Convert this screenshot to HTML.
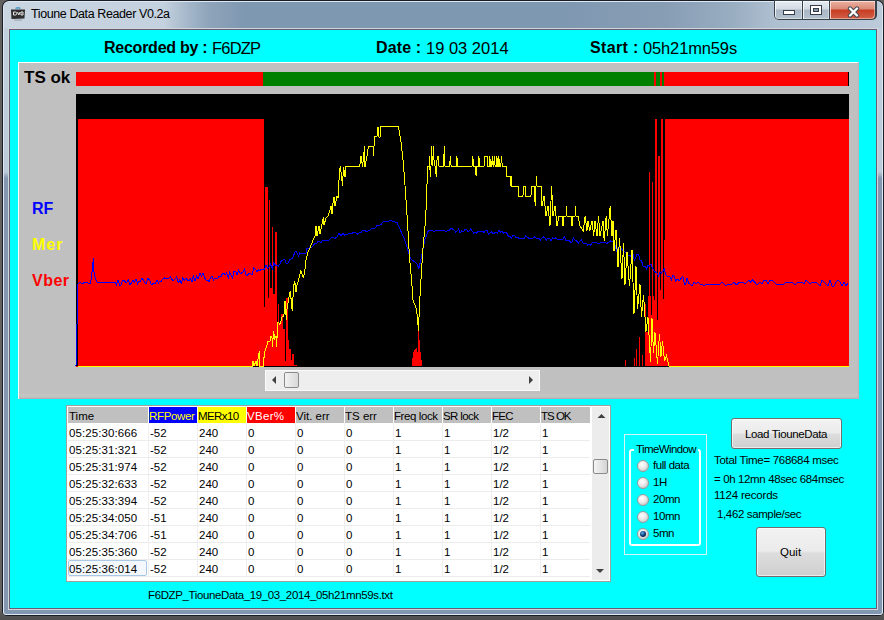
<!DOCTYPE html>
<html><head><meta charset="utf-8">
<style>
html,body{margin:0;padding:0;}
body{width:884px;height:620px;overflow:hidden;position:relative;background:#626160;font-family:"Liberation Sans",sans-serif;}
.a{position:absolute;}
.t{position:absolute;white-space:nowrap;line-height:1;}
#win{left:2px;top:0;width:882px;height:616px;background:#1a1e24;border-radius:7px 7px 5px 5px;}
#winl{left:3px;top:1px;width:880px;height:614px;background:#dde8f5;border-radius:6px 6px 3px 3px;}
#frame{left:4px;top:2px;width:878px;height:612px;border-radius:5px 5px 2px 2px;
 background:linear-gradient(to bottom,#c2cfdc 0px,#bccbd9 170px,#8398b0 176px,#8398b0 612px);}
#title{left:4px;top:2px;width:878px;height:26px;border-radius:5px 5px 0 0;background:linear-gradient(to right,#c9d5e1 0px,#c4d1de 160px,#a9bbcd 180px,#8ea4ba 205px,#7f98b1 240px,#7f98b1 560px,#879db4 660px,#9aaec2 730px,#aebfd0 770px,#bccada 878px);}
#cl{left:8px;top:28px;width:870px;height:582px;background:#ccd8d8;}
#cb{left:9px;top:29px;width:868px;height:580px;background:#6a5a78;}
#client{left:10px;top:30px;width:866px;height:578px;background:#00ffff;}
#icon{left:12px;top:8px;width:12px;height:10px;background:#3a3a3a;border-radius:2px;transform:skewY(3deg);}
#icon2{left:14px;top:10px;width:8px;height:6px;background:#d8d8d8;}
#icon3{left:16px;top:11px;width:4px;height:4px;background:#3a3a3a;}
#ttl{left:31px;top:8px;font-size:12.5px;letter-spacing:-0.4px;color:#000;}
/* caption buttons */
#btns{left:774px;top:0px;width:103px;height:20px;background:#38404a;border-radius:0 0 5px 5px;}
#bmin{left:775px;top:1px;width:27px;height:18px;border-radius:0 0 0 4px;box-shadow:inset 1px 1px 0 rgba(255,255,255,0.75),inset -1px -1px 0 rgba(255,255,255,0.4);background:linear-gradient(to bottom,#e6ecf2 0px,#d2dae3 8px,#aab8c6 9px,#b4c1cf 18px);}
#bmax{left:803px;top:1px;width:26px;height:18px;box-shadow:inset 1px 1px 0 rgba(255,255,255,0.75),inset -1px -1px 0 rgba(255,255,255,0.4);background:linear-gradient(to bottom,#e6ecf2 0px,#d2dae3 8px,#aab8c6 9px,#b4c1cf 18px);}
#bcls{left:830px;top:1px;width:45px;height:18px;border-radius:0 0 4px 0;box-shadow:inset 1px 1px 0 rgba(255,230,220,0.8),inset -1px -1px 0 rgba(255,220,210,0.5);background:linear-gradient(to bottom,#eab2a4 0px,#dc8a76 8px,#c73c22 9px,#d26048 18px);}
#imin{left:783px;top:10px;width:10px;height:3px;background:#fff;border:1px solid #333c48;}
#imax{left:810px;top:5px;width:12px;height:10px;box-sizing:border-box;border:1px solid #333c48;background:#fff;}
#imaxi{left:813px;top:8px;width:6px;height:4px;box-sizing:border-box;border:1px solid #333c48;background:#8a98a8;}
/* header */
.hb{font-weight:bold;font-size:16px;color:#000;}
.hn{font-size:16.5px;color:#000;}
/* panel */
#panel{left:18px;top:62px;width:841px;height:337px;background:#c0c0c0;}
#panelb{left:18px;top:398px;width:841px;height:1px;background:#b4acb4;}
#panelr{left:858px;top:62px;width:1px;height:337px;background:#bcb4bc;}
#panell{left:19px;top:394px;width:839px;height:2px;background:#c6c6c0;}
#panelw1{left:18px;top:62px;width:840px;height:1px;background:#fff;}
#panelw2{left:18px;top:62px;width:1px;height:337px;background:#fff;}
#tsok{left:24px;top:69px;font-size:17px;font-weight:bold;color:#000;}
.lab{font-size:16px;font-weight:bold;}
/* scrollbar */
#hs{left:265px;top:370px;width:275px;height:21px;background:#eeeeee;border:1px solid #fafafa;box-sizing:border-box;}
#hthumb{left:284px;top:372px;width:15px;height:16px;box-sizing:border-box;border:1px solid #8a8a8a;border-radius:2px;background:linear-gradient(to right,#f2f2f2,#d8d8d8);}
/* table */
#tbl{left:66px;top:405px;width:545px;height:177px;background:#fff;border:1px solid #a0a0a0;box-sizing:border-box;}
.hd{position:absolute;top:407px;height:16px;background:#c0c0c0;}
.ht{position:absolute;top:411px;font-size:11.5px;white-space:nowrap;line-height:1;}
.cell{position:absolute;font-size:11.5px;white-space:nowrap;line-height:1;color:#000;}
.vl{position:absolute;top:423px;width:1px;height:153px;background:#efefef;}
.hl{position:absolute;left:68px;width:522px;height:1px;background:#ececec;}
#vs{left:592px;top:407px;width:17px;height:173px;background:#ececec;}
#vthumb{left:593px;top:459px;width:15px;height:15px;box-sizing:border-box;border:1px solid #8a8a8a;border-radius:2px;background:linear-gradient(to right,#f4f4f4,#d4d4d4);}
#sel{left:68px;top:560px;width:79px;height:16px;border:1px solid #a8c8e8;box-sizing:border-box;border-radius:2px;background:#f4f8fc;}
/* right */
#pnl{left:624px;top:434px;width:83px;height:121px;border:1px solid #d8f4f4;box-sizing:border-box;}
#grp{left:629px;top:449px;width:72px;height:97px;border:2px solid #fff;box-sizing:border-box;border-radius:3px;}
#grpcap{left:634px;top:442px;width:64px;height:12px;background:#00ffff;}
.rb{position:absolute;left:637px;width:12px;height:12px;border-radius:50%;box-sizing:border-box;border:1px solid #9a9a9a;background:radial-gradient(circle at 40% 35%,#ffffff 0px,#e8e8e8 4px,#c8c8c8 7px);}
.rl{position:absolute;left:653px;font-size:11.5px;letter-spacing:-0.45px;line-height:1;white-space:nowrap;}
.btn{position:absolute;box-sizing:border-box;border:1px solid #707070;border-radius:3px;box-shadow:inset 0 0 0 1px rgba(255,255,255,0.6);background:linear-gradient(to bottom,#f2f2f2 0%,#ebebeb 48%,#dddddd 52%,#cfcfcf 100%);}
.rt{position:absolute;font-size:11.5px;line-height:1;white-space:nowrap;color:#000;}
</style></head><body>
<div class="a" style="left:0;top:612px;width:884px;height:8px;background:linear-gradient(to bottom,#5a5a5a,#4e4e4e);"></div>
<div id="win" class="a"></div>
<div id="winl" class="a"></div>
<div id="frame" class="a"></div>
<div id="title" class="a"></div>
<div id="cl" class="a"></div>
<div id="cb" class="a"></div>
<div id="client" class="a"></div>
<svg class="a" style="left:10px;top:6px;" width="16" height="15" viewBox="0 0 16 15"><path d="M5.5 2.5 Q8 1 10.5 2.5" stroke="#4a9ad0" stroke-width="1.3" fill="none"/><path d="M1 3.5 L15 3.5 L14.5 12.5 L1.5 13 Z" fill="#2e2e2e"/><path d="M3.5 6 h2 q1.2 0 1.2 1.5 q0 1.5 -1.2 1.5 h-2 z M7.5 6 l1.3 3 l1.3 -3 M11 6 h2 v3 h-2 z" stroke="#e8e8e8" stroke-width="1" fill="none"/><path d="M4 14 h8" stroke="#9aa0a8" stroke-width="1"/></svg>
<div id="ttl" class="t">Tioune Data Reader V0.2a</div>
<div id="btns" class="a"></div>
<div id="bmin" class="a"></div><div id="bmax" class="a"></div><div id="bcls" class="a"></div>
<div id="imin" class="a"></div>
<div id="imax" class="a"></div><div id="imaxi" class="a"></div>
<div id="icls" class="a" style="left:847px;top:4px;width:13px;height:12px;">
<svg width="13" height="12" viewBox="0 0 13 12"><path d="M3 2.5 L10 9.5 M10 2.5 L3 9.5" stroke="#404850" stroke-width="4.4" stroke-linecap="round"/><path d="M3 2.5 L10 9.5 M10 2.5 L3 9.5" stroke="#ffffff" stroke-width="2.4" stroke-linecap="round"/></svg></div>

<div id="h1" class="t hb" style="left:104px;top:40px;letter-spacing:-0.25px;">Recorded by :</div>
<div id="h1v" class="t hn" style="left:212px;top:40px;letter-spacing:-0.8px;">F6DZP</div>
<div id="h2" class="t hb" style="left:376px;top:40px;letter-spacing:0.13px;">Date :</div>
<div id="h2v" class="t hn" style="left:426px;top:40px;letter-spacing:0px;">19 03 2014</div>
<div id="h3" class="t hb" style="left:590px;top:40px;letter-spacing:0.36px;">Start :</div>
<div id="h3v" class="t hn" style="left:643px;top:40px;letter-spacing:-0.14px;">05h21mn59s</div>

<div id="panel" class="a"></div>
<div id="panelb" class="a"></div><div id="panelr" class="a"></div><div id="panell" class="a"></div><div id="panelw1" class="a"></div>
<div id="panelw2" class="a"></div>
<div id="tsok" class="t">TS ok</div>
<div id="lrf" class="t lab" style="left:32px;top:201px;color:#0000ff;">RF</div>
<div id="lmer" class="t lab" style="left:32px;top:237px;color:#ffff00;letter-spacing:1px;">Mer</div>
<div id="lvb" class="t lab" style="left:32px;top:273px;color:#ff0000;letter-spacing:0.5px;">Vber</div>

<svg class="a" style="left:0;top:0;" width="884" height="620" shape-rendering="crispEdges">
<rect x="76" y="72" width="772" height="14" fill="#ff0000"/>
<rect x="263" y="72" width="391" height="14" fill="#008000"/>
<rect x="656" y="72" width="4" height="14" fill="#008000"/>
<rect x="662" y="72" width="2" height="14" fill="#008000"/>
<rect x="848" y="72" width="1" height="14" fill="#000000"/>
<rect x="76" y="94" width="773" height="273" fill="#000000"/>
<path d="M78 119h1V366h-1zM79 119h1V366h-1zM80 119h1V366h-1zM81 119h1V366h-1zM82 119h1V366h-1zM83 119h1V366h-1zM84 119h1V366h-1zM85 119h1V366h-1zM86 119h1V366h-1zM87 119h1V366h-1zM88 119h1V366h-1zM89 119h1V366h-1zM90 119h1V366h-1zM91 119h1V366h-1zM92 119h1V366h-1zM93 119h1V366h-1zM94 119h1V366h-1zM95 119h1V366h-1zM96 119h1V366h-1zM97 119h1V366h-1zM98 119h1V366h-1zM99 119h1V366h-1zM100 119h1V366h-1zM101 119h1V366h-1zM102 119h1V366h-1zM103 119h1V366h-1zM104 119h1V366h-1zM105 119h1V366h-1zM106 119h1V366h-1zM107 119h1V366h-1zM108 119h1V366h-1zM109 119h1V366h-1zM110 119h1V366h-1zM111 119h1V366h-1zM112 119h1V366h-1zM113 119h1V366h-1zM114 119h1V366h-1zM115 119h1V366h-1zM116 119h1V366h-1zM117 119h1V366h-1zM118 119h1V366h-1zM119 119h1V366h-1zM120 119h1V366h-1zM121 119h1V366h-1zM122 119h1V366h-1zM123 119h1V366h-1zM124 119h1V366h-1zM125 119h1V366h-1zM126 119h1V366h-1zM127 119h1V366h-1zM128 119h1V366h-1zM129 119h1V366h-1zM130 119h1V366h-1zM131 119h1V366h-1zM132 119h1V366h-1zM133 119h1V366h-1zM134 119h1V366h-1zM135 119h1V366h-1zM136 119h1V366h-1zM137 119h1V366h-1zM138 119h1V366h-1zM139 119h1V366h-1zM140 119h1V366h-1zM141 119h1V366h-1zM142 119h1V366h-1zM143 119h1V366h-1zM144 119h1V366h-1zM145 119h1V366h-1zM146 119h1V366h-1zM147 119h1V366h-1zM148 119h1V366h-1zM149 119h1V366h-1zM150 119h1V366h-1zM151 119h1V366h-1zM152 119h1V366h-1zM153 119h1V366h-1zM154 119h1V366h-1zM155 119h1V366h-1zM156 119h1V366h-1zM157 119h1V366h-1zM158 119h1V366h-1zM159 119h1V366h-1zM160 119h1V366h-1zM161 119h1V366h-1zM162 119h1V366h-1zM163 119h1V366h-1zM164 119h1V366h-1zM165 119h1V366h-1zM166 119h1V366h-1zM167 119h1V366h-1zM168 119h1V366h-1zM169 119h1V366h-1zM170 119h1V366h-1zM171 119h1V366h-1zM172 119h1V366h-1zM173 119h1V366h-1zM174 119h1V366h-1zM175 119h1V366h-1zM176 119h1V366h-1zM177 119h1V366h-1zM178 119h1V366h-1zM179 119h1V366h-1zM180 119h1V366h-1zM181 119h1V366h-1zM182 119h1V366h-1zM183 119h1V366h-1zM184 119h1V366h-1zM185 119h1V366h-1zM186 119h1V366h-1zM187 119h1V366h-1zM188 119h1V366h-1zM189 119h1V366h-1zM190 119h1V366h-1zM191 119h1V366h-1zM192 119h1V366h-1zM193 119h1V366h-1zM194 119h1V366h-1zM195 119h1V366h-1zM196 119h1V366h-1zM197 119h1V366h-1zM198 119h1V366h-1zM199 119h1V366h-1zM200 119h1V366h-1zM201 119h1V366h-1zM202 119h1V366h-1zM203 119h1V366h-1zM204 119h1V366h-1zM205 119h1V366h-1zM206 119h1V366h-1zM207 119h1V366h-1zM208 119h1V366h-1zM209 119h1V366h-1zM210 119h1V366h-1zM211 119h1V366h-1zM212 119h1V366h-1zM213 119h1V366h-1zM214 119h1V366h-1zM215 119h1V366h-1zM216 119h1V366h-1zM217 119h1V366h-1zM218 119h1V366h-1zM219 119h1V366h-1zM220 119h1V366h-1zM221 119h1V366h-1zM222 119h1V366h-1zM223 119h1V366h-1zM224 119h1V366h-1zM225 119h1V366h-1zM226 119h1V366h-1zM227 119h1V366h-1zM228 119h1V366h-1zM229 119h1V366h-1zM230 119h1V366h-1zM231 119h1V366h-1zM232 119h1V366h-1zM233 119h1V366h-1zM234 119h1V366h-1zM235 119h1V366h-1zM236 119h1V366h-1zM237 119h1V366h-1zM238 119h1V366h-1zM239 119h1V366h-1zM240 119h1V366h-1zM241 119h1V366h-1zM242 119h1V366h-1zM243 119h1V366h-1zM244 119h1V366h-1zM245 119h1V366h-1zM246 119h1V366h-1zM247 119h1V366h-1zM248 119h1V366h-1zM249 119h1V366h-1zM250 119h1V366h-1zM251 119h1V366h-1zM252 119h1V366h-1zM253 119h1V366h-1zM254 119h1V366h-1zM255 119h1V366h-1zM256 119h1V366h-1zM257 119h1V366h-1zM258 119h1V366h-1zM259 119h1V366h-1zM260 119h1V366h-1zM261 119h1V366h-1zM262 119h1V366h-1zM263 119h1V366h-1zM264 307h1V366h-1zM265 187h1V366h-1zM266 187h1V366h-1zM267 187h1V366h-1zM268 298h1V366h-1zM269 200h1V366h-1zM270 288h1V366h-1zM271 288h1V366h-1zM272 227h1V366h-1zM273 294h1V366h-1zM274 294h1V366h-1zM275 232h1V366h-1zM276 232h1V366h-1zM277 322h1V366h-1zM278 304h1V366h-1zM279 324h1V366h-1zM280 324h1V366h-1zM281 314h1V366h-1zM282 314h1V366h-1zM283 329h1V366h-1zM284 329h1V366h-1zM285 361h1V366h-1zM286 298h1V366h-1zM287 298h1V366h-1zM288 340h1V366h-1zM289 349h1V366h-1zM290 349h1V366h-1zM291 360h1V366h-1zM292 354h1V366h-1zM293 354h1V366h-1zM294 365h1V366h-1zM295 365h1V366h-1zM296 365h1V366h-1zM412 358h1V366h-1zM413 352h1V366h-1zM414 350h1V366h-1zM415 349h1V366h-1zM416 348h1V366h-1zM417 352h1V366h-1zM418 317h1V366h-1zM419 340h1V366h-1zM420 352h1V366h-1zM421 360h1V366h-1zM625 360h1V366h-1zM634 358h1V366h-1zM636 349h1V366h-1zM639 337h1V366h-1zM642 355h1V366h-1zM645 304h1V366h-1zM646 332h1V366h-1zM647 332h1V366h-1zM648 296h1V366h-1zM649 172h1V366h-1zM650 296h1V366h-1zM651 315h1V366h-1zM652 182h1V366h-1zM653 296h1V366h-1zM654 300h1V366h-1zM655 119h1V366h-1zM656 119h1V366h-1zM657 320h1V366h-1zM658 156h1V366h-1zM659 156h1V366h-1zM660 290h1V366h-1zM661 119h1V366h-1zM662 119h1V366h-1zM663 299h1V366h-1zM664 240h1V366h-1zM665 119h1V366h-1zM666 119h1V366h-1zM667 119h1V366h-1zM668 119h1V366h-1zM669 119h1V366h-1zM670 119h1V366h-1zM671 119h1V366h-1zM672 119h1V366h-1zM673 119h1V366h-1zM674 119h1V366h-1zM675 119h1V366h-1zM676 119h1V366h-1zM677 119h1V366h-1zM678 119h1V366h-1zM679 119h1V366h-1zM680 119h1V366h-1zM681 119h1V366h-1zM682 119h1V366h-1zM683 119h1V366h-1zM684 119h1V366h-1zM685 119h1V366h-1zM686 119h1V366h-1zM687 119h1V366h-1zM688 119h1V366h-1zM689 119h1V366h-1zM690 119h1V366h-1zM691 119h1V366h-1zM692 119h1V366h-1zM693 119h1V366h-1zM694 119h1V366h-1zM695 119h1V366h-1zM696 119h1V366h-1zM697 119h1V366h-1zM698 119h1V366h-1zM699 119h1V366h-1zM700 119h1V366h-1zM701 119h1V366h-1zM702 119h1V366h-1zM703 119h1V366h-1zM704 119h1V366h-1zM705 119h1V366h-1zM706 119h1V366h-1zM707 119h1V366h-1zM708 119h1V366h-1zM709 119h1V366h-1zM710 119h1V366h-1zM711 119h1V366h-1zM712 119h1V366h-1zM713 119h1V366h-1zM714 119h1V366h-1zM715 119h1V366h-1zM716 119h1V366h-1zM717 119h1V366h-1zM718 119h1V366h-1zM719 119h1V366h-1zM720 119h1V366h-1zM721 119h1V366h-1zM722 119h1V366h-1zM723 119h1V366h-1zM724 119h1V366h-1zM725 119h1V366h-1zM726 119h1V366h-1zM727 119h1V366h-1zM728 119h1V366h-1zM729 119h1V366h-1zM730 119h1V366h-1zM731 119h1V366h-1zM732 119h1V366h-1zM733 119h1V366h-1zM734 119h1V366h-1zM735 119h1V366h-1zM736 119h1V366h-1zM737 119h1V366h-1zM738 119h1V366h-1zM739 119h1V366h-1zM740 119h1V366h-1zM741 119h1V366h-1zM742 119h1V366h-1zM743 119h1V366h-1zM744 119h1V366h-1zM745 119h1V366h-1zM746 119h1V366h-1zM747 119h1V366h-1zM748 119h1V366h-1zM749 119h1V366h-1zM750 119h1V366h-1zM751 119h1V366h-1zM752 119h1V366h-1zM753 119h1V366h-1zM754 119h1V366h-1zM755 119h1V366h-1zM756 119h1V366h-1zM757 119h1V366h-1zM758 119h1V366h-1zM759 119h1V366h-1zM760 119h1V366h-1zM761 119h1V366h-1zM762 119h1V366h-1zM763 119h1V366h-1zM764 119h1V366h-1zM765 119h1V366h-1zM766 119h1V366h-1zM767 119h1V366h-1zM768 119h1V366h-1zM769 119h1V366h-1zM770 119h1V366h-1zM771 119h1V366h-1zM772 119h1V366h-1zM773 119h1V366h-1zM774 119h1V366h-1zM775 119h1V366h-1zM776 119h1V366h-1zM777 119h1V366h-1zM778 119h1V366h-1zM779 119h1V366h-1zM780 119h1V366h-1zM781 119h1V366h-1zM782 119h1V366h-1zM783 119h1V366h-1zM784 119h1V366h-1zM785 119h1V366h-1zM786 119h1V366h-1zM787 119h1V366h-1zM788 119h1V366h-1zM789 119h1V366h-1zM790 119h1V366h-1zM791 119h1V366h-1zM792 119h1V366h-1zM793 119h1V366h-1zM794 119h1V366h-1zM795 119h1V366h-1zM796 119h1V366h-1zM797 119h1V366h-1zM798 119h1V366h-1zM799 119h1V366h-1zM800 119h1V366h-1zM801 119h1V366h-1zM802 119h1V366h-1zM803 119h1V366h-1zM804 119h1V366h-1zM805 119h1V366h-1zM806 119h1V366h-1zM807 119h1V366h-1zM808 119h1V366h-1zM809 119h1V366h-1zM810 119h1V366h-1zM811 119h1V366h-1zM812 119h1V366h-1zM813 119h1V366h-1zM814 119h1V366h-1zM815 119h1V366h-1zM816 119h1V366h-1zM817 119h1V366h-1zM818 119h1V366h-1zM819 119h1V366h-1zM820 119h1V366h-1zM821 119h1V366h-1zM822 119h1V366h-1zM823 119h1V366h-1zM824 119h1V366h-1zM825 119h1V366h-1zM826 119h1V366h-1zM827 119h1V366h-1zM828 119h1V366h-1zM829 119h1V366h-1zM830 119h1V366h-1zM831 119h1V366h-1zM832 119h1V366h-1zM833 119h1V366h-1zM834 119h1V366h-1zM835 119h1V366h-1zM836 119h1V366h-1zM837 119h1V366h-1zM838 119h1V366h-1zM839 119h1V366h-1zM840 119h1V366h-1zM841 119h1V366h-1zM842 119h1V366h-1zM843 119h1V366h-1zM844 119h1V366h-1zM845 119h1V366h-1zM846 119h1V366h-1zM847 119h1V366h-1zM848 119h1V366h-1z" fill="#ff0000"/>
<rect x="76" y="94" width="2" height="273" fill="#000000"/>
<rect x="78" y="366" width="175" height="1" fill="#ffff00"/>
<rect x="669" y="366" width="180" height="1" fill="#ffff00"/>
<rect x="76" y="366" width="2" height="1" fill="#ff0000"/>
<polyline points="76.0,366.0 78.0,284.0 80.0,282.0 82.0,284.0 85.0,282.0 88.0,283.0 90.0,284.0 91.0,280.0 92.0,272.0 93.4,258.0 94.0,272.0 95.0,277.0 96.0,280.0 97.0,282.0 115.0,282.0 115.0,282.0 116.5,285.0 118.0,280.0 119.5,285.0 121.0,285.0 122.5,280.0 124.0,280.0 125.5,282.0 127.0,282.0 128.5,280.0 130.0,285.0 131.5,283.0 133.0,280.0 134.5,282.0 136.0,279.0 137.5,284.0 139.0,281.0 140.5,281.0 142.0,278.0 143.5,280.0 145.0,283.0 146.5,283.0 148.0,278.0 149.5,280.0 151.0,284.0 152.5,284.0 154.0,283.0 155.5,283.0 157.0,280.0 158.5,283.0 160.0,281.0 161.5,281.0 163.0,279.0 164.6,278.0 166.1,279.0 167.6,278.0 169.1,278.0 170.6,277.0 172.2,280.0 173.7,280.0 175.2,279.0 176.7,277.0 178.2,283.0 179.8,280.0 181.3,283.0 182.8,278.0 184.3,280.0 185.8,278.0 187.4,280.0 188.9,281.0 190.4,279.0 191.9,282.0 193.4,276.0 195.0,281.0 196.5,276.0 198.0,279.0 200.0,273.0 201.5,276.0 203.0,273.0 204.5,278.0 206.0,280.0 207.5,280.0 209.0,282.0 210.4,278.0 211.9,276.0 213.4,280.0 214.9,278.0 216.3,278.0 217.8,278.0 219.3,276.0 220.8,277.0 222.3,274.0 223.7,273.0 225.2,275.0 226.7,273.0 228.2,278.0 229.7,272.0 231.1,275.0 232.6,278.0 234.1,271.0 235.6,271.0 237.0,275.0 238.5,270.0 240.0,273.0 241.5,273.0 243.1,272.0 244.6,269.0 246.1,275.0 247.7,275.0 249.2,273.0 250.7,274.0 252.3,274.0 253.8,268.0 255.3,269.0 256.9,272.0 258.4,270.0 259.9,271.0 261.5,269.0 263.0,269.0 264.5,269.0 266.1,265.0 267.6,268.0 269.2,267.0 270.7,264.0 272.3,269.0 273.8,263.0 275.4,265.0 276.9,265.0 278.5,266.0 280.0,264.0 281.6,260.0 283.1,260.0 284.7,259.0 286.3,264.0 287.9,263.0 289.4,260.0 291.0,259.0 292.8,258.0 294.5,253.0 295.9,251.0 297.2,253.0 298.6,256.0 300.0,252.6 300.0,253.0 302.0,254.0 304.0,253.0 306.0,253.0 307.0,248.0 309.5,248.0 312.0,247.0 314.5,244.0 317.0,243.0 318.0,241.0 320.0,242.0 321.5,242.0 323.0,240.0 324.8,240.0 326.5,240.0 328.2,241.0 330.0,239.0 332.0,237.0 334.0,238.0 335.5,238.0 337.0,237.0 339.0,233.0 341.0,236.0 343.0,233.0 344.5,235.0 346.0,234.0 348.0,234.0 350.0,233.0 352.5,233.0 355.0,232.0 357.5,234.0 360.0,232.0 361.5,232.0 363.0,230.0 364.5,230.0 366.0,232.0 368.0,231.0 370.0,230.0 372.5,228.0 375.0,228.0 377.5,225.0 380.0,225.0 381.5,224.0 383.0,222.0 384.8,221.0 386.5,221.0 388.2,222.0 390.0,220.0 391.8,221.0 393.5,221.0 395.2,222.0 397.0,222.4 404.5,239.4 410.6,258.7 416.6,263.5 419.0,268.4 421.5,256.3 425.0,239.4 428.7,229.7 428.7,230.0 430.2,230.0 431.7,230.0 433.2,231.0 434.7,231.0 436.2,230.0 437.7,231.0 439.2,230.0 440.7,231.0 442.2,230.0 443.7,230.0 445.2,231.0 446.7,231.0 448.1,230.0 449.6,230.0 451.1,228.0 452.6,229.0 454.1,230.0 455.6,232.0 457.1,231.0 458.6,229.0 460.1,233.0 461.6,231.0 463.1,232.0 464.6,230.0 466.1,229.0 467.6,231.0 469.1,231.0 470.6,229.0 472.1,231.0 473.6,233.0 475.1,232.0 476.6,233.0 478.1,231.0 479.6,231.0 481.1,231.0 482.6,231.0 484.1,233.0 485.6,230.0 487.0,230.0 488.5,234.0 490.0,233.0 491.5,232.0 493.0,234.0 494.5,233.0 496.0,232.0 497.5,233.0 499.0,230.0 500.5,232.0 502.0,231.0 503.5,233.0 505.0,232.0 506.7,233.0 508.3,236.0 510.0,236.0 511.5,238.0 513.1,235.0 514.6,235.0 516.2,238.0 517.7,237.0 519.2,239.0 520.8,238.0 522.3,238.0 523.8,239.0 525.4,236.0 526.9,237.0 528.5,238.0 530.0,238.0 531.5,238.0 533.0,238.0 534.5,237.0 536.0,238.0 537.5,238.0 539.0,238.0 540.5,240.0 542.0,238.0 543.5,237.0 545.0,238.0 546.5,240.0 548.0,238.0 549.5,238.0 551.0,241.0 552.5,238.0 554.0,239.0 555.5,238.0 557.0,239.0 558.5,239.0 560.0,240.0 561.5,239.0 563.0,239.0 564.5,237.0 566.0,241.0 567.5,240.0 569.0,240.0 570.5,242.0 572.0,242.0 573.5,238.0 575.0,240.0 576.7,241.0 578.3,243.0 580.0,241.0 581.5,240.0 583.0,243.0 584.5,243.0 586.1,243.0 587.6,245.0 589.1,244.0 590.6,245.0 592.2,243.0 593.7,242.0 595.2,242.0 596.7,243.0 598.3,244.0 599.8,243.0 601.3,242.0 602.8,242.0 604.4,242.0 605.9,243.0 607.4,243.0 608.9,242.0 610.5,241.0 612.0,242.0 612.0,242.0 613.5,241.0 615.0,245.0 616.7,251.0 618.3,247.0 620.0,248.0 621.7,249.0 623.3,251.0 625.0,252.0 626.7,253.0 628.3,256.0 630.0,255.0 631.4,258.0 632.9,254.0 634.3,260.0 635.7,258.0 637.1,254.0 638.6,254.0 640.0,260.0 641.6,261.0 643.2,267.0 644.8,266.0 646.4,269.0 648.0,265.0 649.5,266.0 651.0,264.0 652.5,268.0 654.0,271.0 655.5,272.0 657.0,273.0 658.5,276.0 660.0,272.0 661.4,273.0 662.9,271.0 664.3,269.0 665.7,275.0 667.1,276.0 668.6,276.0 670.0,277.0 671.4,280.0 672.9,275.0 674.3,276.0 675.7,281.0 677.1,279.0 678.6,280.0 680.0,280.0 681.4,278.0 682.9,276.0 684.3,284.0 685.7,285.0 687.1,278.0 688.6,283.0 690.0,284.0 690.0,284.0 692.0,286.0 694.0,282.0 696.0,284.0 698.0,282.0 700.0,284.0 702.0,284.0 704.0,286.0 706.0,284.0 708.0,284.0 710.0,284.0 712.0,284.0 714.0,284.0 716.0,284.0 718.0,284.0 720.0,284.0 722.0,282.0 724.0,284.0 726.0,286.0 728.0,284.0 730.0,284.0 731.9,284.0 733.8,282.0 735.6,284.0 737.5,284.0 739.4,282.0 741.2,282.0 743.1,282.0 745.0,284.0 746.9,282.0 748.8,280.0 750.6,282.0 752.5,280.0 754.4,282.0 756.2,284.0 758.1,284.0 760.0,282.0 762.0,284.0 764.0,280.0 766.0,280.0 768.0,284.0 770.0,280.0 772.0,280.0 774.0,282.0 776.0,284.0 778.0,284.0 780.0,284.0 782.0,284.0 784.0,284.0 786.0,282.0 788.0,282.0 790.0,282.0 792.0,282.0 794.0,284.0 796.0,284.0 798.0,282.0 800.0,282.0 802.0,282.0 804.0,284.0 806.0,280.0 808.0,282.0 810.0,284.0 812.0,282.0 814.0,282.0 816.0,282.0 818.0,284.0 820.0,286.0 822.0,280.0 824.0,282.0 826.0,284.0 828.0,286.0 830.0,280.0 832.0,286.0 834.0,286.0 836.0,282.0 838.0,280.0 840.0,282.0 842.0,286.0 844.0,282.0 846.0,286.0 848.0,283.0" fill="none" stroke="#0000ff" stroke-width="1"/>
<polyline points="252.0,366.0 253.0,361.0 254.0,366.0 256.0,361.0 257.0,366.0 258.0,359.0 259.3,351.0 259.6,366.0 263.5,366.0 263.8,359.0 265.0,351.0 266.7,346.7 267.7,341.5 270.0,341.0 270.6,336.4 271.9,336.4 272.5,346.7 273.5,331.2 274.8,338.3 276.0,335.7 276.7,346.7 277.4,328.0 278.0,322.0 280.0,324.5 282.0,317.0 283.8,316.0 284.5,309.7 285.0,301.3 286.4,320.0 287.0,309.0 289.0,296.8 290.3,291.0 292.2,311.0 292.8,301.3 293.5,286.5 294.8,281.3 296.0,291.6 296.7,285.8 298.0,282.0 301.0,270.6 303.4,278.0 305.3,267.4 306.0,260.0 308.0,252.0 310.0,248.0 313.0,240.0 315.0,236.0 316.0,226.0 317.0,236.0 319.0,226.0 320.0,234.0 322.0,224.0 323.5,217.0 324.0,225.0 326.0,218.0 328.0,216.0 330.0,210.0 331.0,206.0 332.0,214.0 333.0,203.0 334.0,197.0 335.0,206.0 337.0,196.0 338.0,198.0 339.5,172.0 340.3,166.0 341.0,172.0 342.5,186.0 343.5,167.0 345.0,177.0 346.0,166.0 359.7,166.0 361.0,156.0 362.5,167.0 364.0,152.0 364.5,146.0 365.0,167.0 367.0,156.0 368.5,146.0 373.0,146.0 373.5,156.0 374.0,146.0 375.0,136.0 377.0,136.0 378.0,126.6 379.0,137.0 380.0,137.0 381.0,126.6 398.4,126.6 400.0,136.0 401.0,142.0 403.0,160.0 404.5,178.0 406.0,200.0 407.5,222.0 409.4,256.0 411.8,283.0 413.0,300.0 416.6,309.5 418.5,331.0 419.0,317.0 420.2,292.6 422.7,251.5 425.8,217.0 426.5,194.0 427.5,175.0 428.0,166.0 429.0,166.0 429.3,156.0 429.7,166.0 430.5,176.5 431.0,166.0 431.5,146.0 432.0,160.0 432.5,166.0 433.5,146.0 434.0,160.0 435.0,166.0 436.3,176.5 437.0,160.0 437.5,156.0 438.5,156.0 439.0,166.0 443.6,166.0 444.3,146.0 445.0,166.0 449.7,166.0 450.4,156.0 451.1,166.0 456.2,166.0 456.9,156.0 457.6,166.0 472.0,166.0 472.8,156.0 473.6,166.0 475.5,166.0 476.1,176.0 476.7,166.0 478.2,166.0 478.9,156.0 479.6,166.0 484.0,166.0 484.6,156.0 487.1,156.0 487.7,166.0 489.1,166.0 489.8,156.0 490.5,166.0 491.7,166.0 492.4,156.0 493.1,166.0 493.7,166.0 494.4,156.0 495.1,166.0 496.2,166.0 496.9,156.0 497.6,166.0 498.1,166.0 498.8,156.0 499.5,166.0 500.8,166.0 501.5,156.0 502.2,166.0 506.0,166.0 506.5,176.0 510.0,176.0 510.5,186.0 511.0,176.0 511.5,186.0 518.7,186.0 519.0,196.0 523.0,196.0 523.2,186.0 525.5,186.0 525.8,196.0 531.0,196.0 531.2,186.0 534.0,186.0 534.3,196.0 535.5,206.0 536.0,186.0 536.5,176.0 537.0,186.0 541.0,186.0 542.0,206.0 544.0,196.0 546.0,216.0 548.0,206.0 550.0,226.0 551.6,186.0 553.0,216.0 555.0,206.0 557.0,226.0 559.0,216.0 562.0,216.0 563.0,226.0 564.0,216.0 566.0,216.0 566.5,206.0 567.0,216.0 571.0,216.0 572.0,226.0 573.0,216.0 575.0,216.0 575.5,206.0 576.0,216.0 578.0,216.0 580.0,226.0 583.2,231.0 585.2,216.0 586.9,231.0 588.0,221.0 589.7,231.0 592.0,221.0 593.7,236.0 595.0,221.0 597.0,236.0 598.5,216.0 600.0,236.0 603.0,221.0 604.2,241.0 606.2,216.0 607.4,236.0 610.2,206.0 612.0,236.0 613.0,221.0 614.0,251.4 616.0,229.7 618.0,267.0 619.5,237.7 622.0,279.1 623.5,242.9 625.0,284.5 627.0,252.0 629.5,286.3 632.0,249.7 634.0,314.0 636.0,266.3 637.5,309.3 640.0,284.2 641.5,317.3 643.5,294.7 646.0,331.6 648.0,317.5 650.5,361.5 652.0,318.2 653.5,353.2 655.0,332.4 657.5,364.3 659.5,333.7 661.0,356.7 662.5,340.9 664.5,361.2 666.5,355.6 669.0,366.0" fill="none" stroke="#ffff00" stroke-width="1"/>
</svg>

<div id="hs" class="a"></div>
<div id="hthumb" class="a"></div>
<svg class="a" style="left:270px;top:374px;" width="8" height="12"><path d="M6 2 L2 6 L6 10 Z" fill="#404040"/></svg>
<svg class="a" style="left:527px;top:374px;" width="8" height="12"><path d="M2 2 L6 6 L2 10 Z" fill="#404040"/></svg>

<div id="tbl" class="a"></div>
<div class="hd" style="left:68px;width:80px;"></div>
<div class="hd" style="left:149px;width:48px;background:#0000ff;"></div>
<div class="hd" style="left:198px;width:48px;background:#ffff00;"></div>
<div class="hd" style="left:247px;width:48px;background:#ff0000;"></div>
<div class="hd" style="left:296px;width:48px;"></div>
<div class="hd" style="left:345px;width:48px;"></div>
<div class="hd" style="left:394px;width:48px;"></div>
<div class="hd" style="left:443px;width:48px;"></div>
<div class="hd" style="left:492px;width:48px;"></div>
<div class="hd" style="left:541px;width:49px;"></div>
<div class="ht" style="left:69px;color:#000;letter-spacing:0px;">Time</div>
<div class="ht" style="left:149px;color:#ffff00;letter-spacing:-0.35px;">RFPower</div>
<div class="ht" style="left:198px;color:#000;letter-spacing:-0.6px;">MERx10</div>
<div class="ht" style="left:247px;color:#ffffff;letter-spacing:0.3px;">VBer%</div>
<div class="ht" style="left:296px;color:#000;letter-spacing:0px;">Vit. err</div>
<div class="ht" style="left:345px;color:#000;letter-spacing:0px;">TS err</div>
<div class="ht" style="left:394px;color:#000;letter-spacing:-0.4px;">Freq lock</div>
<div class="ht" style="left:443px;color:#000;letter-spacing:-0.6px;">SR lock</div>
<div class="ht" style="left:492px;color:#000;letter-spacing:-0.7px;">FEC</div>
<div class="ht" style="left:541px;color:#000;letter-spacing:-1.0px;">TS OK</div>
<div class="vl" style="left:148px;"></div>
<div class="vl" style="left:197px;"></div>
<div class="vl" style="left:246px;"></div>
<div class="vl" style="left:295px;"></div>
<div class="vl" style="left:344px;"></div>
<div class="vl" style="left:393px;"></div>
<div class="vl" style="left:442px;"></div>
<div class="vl" style="left:491px;"></div>
<div class="vl" style="left:540px;"></div>
<div id="sel" class="a"></div>
<div class="hl" style="top:440px;"></div>
<div class="cell" style="left:69px;top:428px;letter-spacing:0.1px;">05:25:30:666</div>
<div class="cell" style="left:150px;top:428px;letter-spacing:0px;">-52</div>
<div class="cell" style="left:199px;top:428px;letter-spacing:0px;">240</div>
<div class="cell" style="left:248px;top:428px;letter-spacing:0px;">0</div>
<div class="cell" style="left:297px;top:428px;letter-spacing:0px;">0</div>
<div class="cell" style="left:346px;top:428px;letter-spacing:0px;">0</div>
<div class="cell" style="left:395px;top:428px;letter-spacing:0px;">1</div>
<div class="cell" style="left:444px;top:428px;letter-spacing:0px;">1</div>
<div class="cell" style="left:493px;top:428px;letter-spacing:0px;">1/2</div>
<div class="cell" style="left:542px;top:428px;letter-spacing:0px;">1</div>
<div class="hl" style="top:457px;"></div>
<div class="cell" style="left:69px;top:445px;letter-spacing:0.1px;">05:25:31:321</div>
<div class="cell" style="left:150px;top:445px;letter-spacing:0px;">-52</div>
<div class="cell" style="left:199px;top:445px;letter-spacing:0px;">240</div>
<div class="cell" style="left:248px;top:445px;letter-spacing:0px;">0</div>
<div class="cell" style="left:297px;top:445px;letter-spacing:0px;">0</div>
<div class="cell" style="left:346px;top:445px;letter-spacing:0px;">0</div>
<div class="cell" style="left:395px;top:445px;letter-spacing:0px;">1</div>
<div class="cell" style="left:444px;top:445px;letter-spacing:0px;">1</div>
<div class="cell" style="left:493px;top:445px;letter-spacing:0px;">1/2</div>
<div class="cell" style="left:542px;top:445px;letter-spacing:0px;">1</div>
<div class="hl" style="top:474px;"></div>
<div class="cell" style="left:69px;top:462px;letter-spacing:0.1px;">05:25:31:974</div>
<div class="cell" style="left:150px;top:462px;letter-spacing:0px;">-52</div>
<div class="cell" style="left:199px;top:462px;letter-spacing:0px;">240</div>
<div class="cell" style="left:248px;top:462px;letter-spacing:0px;">0</div>
<div class="cell" style="left:297px;top:462px;letter-spacing:0px;">0</div>
<div class="cell" style="left:346px;top:462px;letter-spacing:0px;">0</div>
<div class="cell" style="left:395px;top:462px;letter-spacing:0px;">1</div>
<div class="cell" style="left:444px;top:462px;letter-spacing:0px;">1</div>
<div class="cell" style="left:493px;top:462px;letter-spacing:0px;">1/2</div>
<div class="cell" style="left:542px;top:462px;letter-spacing:0px;">1</div>
<div class="hl" style="top:491px;"></div>
<div class="cell" style="left:69px;top:479px;letter-spacing:0.1px;">05:25:32:633</div>
<div class="cell" style="left:150px;top:479px;letter-spacing:0px;">-52</div>
<div class="cell" style="left:199px;top:479px;letter-spacing:0px;">240</div>
<div class="cell" style="left:248px;top:479px;letter-spacing:0px;">0</div>
<div class="cell" style="left:297px;top:479px;letter-spacing:0px;">0</div>
<div class="cell" style="left:346px;top:479px;letter-spacing:0px;">0</div>
<div class="cell" style="left:395px;top:479px;letter-spacing:0px;">1</div>
<div class="cell" style="left:444px;top:479px;letter-spacing:0px;">1</div>
<div class="cell" style="left:493px;top:479px;letter-spacing:0px;">1/2</div>
<div class="cell" style="left:542px;top:479px;letter-spacing:0px;">1</div>
<div class="hl" style="top:508px;"></div>
<div class="cell" style="left:69px;top:496px;letter-spacing:0.1px;">05:25:33:394</div>
<div class="cell" style="left:150px;top:496px;letter-spacing:0px;">-52</div>
<div class="cell" style="left:199px;top:496px;letter-spacing:0px;">240</div>
<div class="cell" style="left:248px;top:496px;letter-spacing:0px;">0</div>
<div class="cell" style="left:297px;top:496px;letter-spacing:0px;">0</div>
<div class="cell" style="left:346px;top:496px;letter-spacing:0px;">0</div>
<div class="cell" style="left:395px;top:496px;letter-spacing:0px;">1</div>
<div class="cell" style="left:444px;top:496px;letter-spacing:0px;">1</div>
<div class="cell" style="left:493px;top:496px;letter-spacing:0px;">1/2</div>
<div class="cell" style="left:542px;top:496px;letter-spacing:0px;">1</div>
<div class="hl" style="top:525px;"></div>
<div class="cell" style="left:69px;top:513px;letter-spacing:0.1px;">05:25:34:050</div>
<div class="cell" style="left:150px;top:513px;letter-spacing:0px;">-51</div>
<div class="cell" style="left:199px;top:513px;letter-spacing:0px;">240</div>
<div class="cell" style="left:248px;top:513px;letter-spacing:0px;">0</div>
<div class="cell" style="left:297px;top:513px;letter-spacing:0px;">0</div>
<div class="cell" style="left:346px;top:513px;letter-spacing:0px;">0</div>
<div class="cell" style="left:395px;top:513px;letter-spacing:0px;">1</div>
<div class="cell" style="left:444px;top:513px;letter-spacing:0px;">1</div>
<div class="cell" style="left:493px;top:513px;letter-spacing:0px;">1/2</div>
<div class="cell" style="left:542px;top:513px;letter-spacing:0px;">1</div>
<div class="hl" style="top:542px;"></div>
<div class="cell" style="left:69px;top:530px;letter-spacing:0.1px;">05:25:34:706</div>
<div class="cell" style="left:150px;top:530px;letter-spacing:0px;">-51</div>
<div class="cell" style="left:199px;top:530px;letter-spacing:0px;">240</div>
<div class="cell" style="left:248px;top:530px;letter-spacing:0px;">0</div>
<div class="cell" style="left:297px;top:530px;letter-spacing:0px;">0</div>
<div class="cell" style="left:346px;top:530px;letter-spacing:0px;">0</div>
<div class="cell" style="left:395px;top:530px;letter-spacing:0px;">1</div>
<div class="cell" style="left:444px;top:530px;letter-spacing:0px;">1</div>
<div class="cell" style="left:493px;top:530px;letter-spacing:0px;">1/2</div>
<div class="cell" style="left:542px;top:530px;letter-spacing:0px;">1</div>
<div class="hl" style="top:559px;"></div>
<div class="cell" style="left:69px;top:547px;letter-spacing:0.1px;">05:25:35:360</div>
<div class="cell" style="left:150px;top:547px;letter-spacing:0px;">-52</div>
<div class="cell" style="left:199px;top:547px;letter-spacing:0px;">240</div>
<div class="cell" style="left:248px;top:547px;letter-spacing:0px;">0</div>
<div class="cell" style="left:297px;top:547px;letter-spacing:0px;">0</div>
<div class="cell" style="left:346px;top:547px;letter-spacing:0px;">0</div>
<div class="cell" style="left:395px;top:547px;letter-spacing:0px;">1</div>
<div class="cell" style="left:444px;top:547px;letter-spacing:0px;">1</div>
<div class="cell" style="left:493px;top:547px;letter-spacing:0px;">1/2</div>
<div class="cell" style="left:542px;top:547px;letter-spacing:0px;">1</div>
<div class="hl" style="top:576px;"></div>
<div class="cell" style="left:69px;top:564px;letter-spacing:0.1px;">05:25:36:014</div>
<div class="cell" style="left:150px;top:564px;letter-spacing:0px;">-52</div>
<div class="cell" style="left:199px;top:564px;letter-spacing:0px;">240</div>
<div class="cell" style="left:248px;top:564px;letter-spacing:0px;">0</div>
<div class="cell" style="left:297px;top:564px;letter-spacing:0px;">0</div>
<div class="cell" style="left:346px;top:564px;letter-spacing:0px;">0</div>
<div class="cell" style="left:395px;top:564px;letter-spacing:0px;">1</div>
<div class="cell" style="left:444px;top:564px;letter-spacing:0px;">1</div>
<div class="cell" style="left:493px;top:564px;letter-spacing:0px;">1/2</div>
<div class="cell" style="left:542px;top:564px;letter-spacing:0px;">1</div>
<div id="vs" class="a"></div>
<div id="vthumb" class="a"></div>
<svg class="a" style="left:595px;top:411px;" width="12" height="10"><path d="M2.5 7 L6.5 3 L10.5 7 Z" fill="#404040"/></svg>
<svg class="a" style="left:594px;top:566px;" width="12" height="10"><path d="M2 3 L6 7 L10 3 Z" fill="#404040"/></svg>

<div id="fname" class="rt" style="left:148px;top:590px;letter-spacing:-0.38px;">F6DZP_TiouneData_19_03_2014_05h21mn59s.txt</div>

<div id="pnl" class="a"></div>
<div id="grp" class="a"></div>
<div id="grpcap" class="a"></div>
<div id="cap" class="rt" style="left:636px;top:444px;letter-spacing:-0.6px;">TimeWindow</div>
<div class="rb" style="top:460px;"></div>
<div class="rl" style="top:460px;">full data</div>
<div class="rb" style="top:477px;"></div>
<div class="rl" style="top:477px;">1H</div>
<div class="rb" style="top:494px;"></div>
<div class="rl" style="top:494px;">20mn</div>
<div class="rb" style="top:511px;"></div>
<div class="rl" style="top:511px;">10mn</div>
<div class="rb" style="top:528px;"></div>
<div class="rl" style="top:528px;">5mn</div>
<div class="a" style="left:640px;top:531px;width:6px;height:6px;border-radius:50%;background:radial-gradient(circle at 40% 35%,#6ab0e8 0px,#1a5a9a 2px,#0a2a5a 3px);"></div>

<div class="btn" style="left:731px;top:418px;width:111px;height:31px;"></div>
<div id="bload" class="rt" style="left:745px;top:429px;letter-spacing:-0.37px;">Load TiouneData</div>
<div id="rt1" class="rt" style="left:714px;top:455px;letter-spacing:-0.3px;">Total Time= 768684 msec</div>
<div id="rt2" class="rt" style="left:714px;top:474px;letter-spacing:-0.37px;">= 0h 12mn 48sec 684msec</div>
<div id="rt3" class="rt" style="left:714px;top:490px;letter-spacing:-0.2px;">1124 records</div>
<div id="rt4" class="rt" style="left:717px;top:509px;letter-spacing:-0.37px;">1,462 sample/sec</div>
<div class="btn" style="left:756px;top:527px;width:70px;height:50px;"></div>
<div id="bquit" class="rt" style="left:780px;top:547px;">Quit</div>
</body></html>
